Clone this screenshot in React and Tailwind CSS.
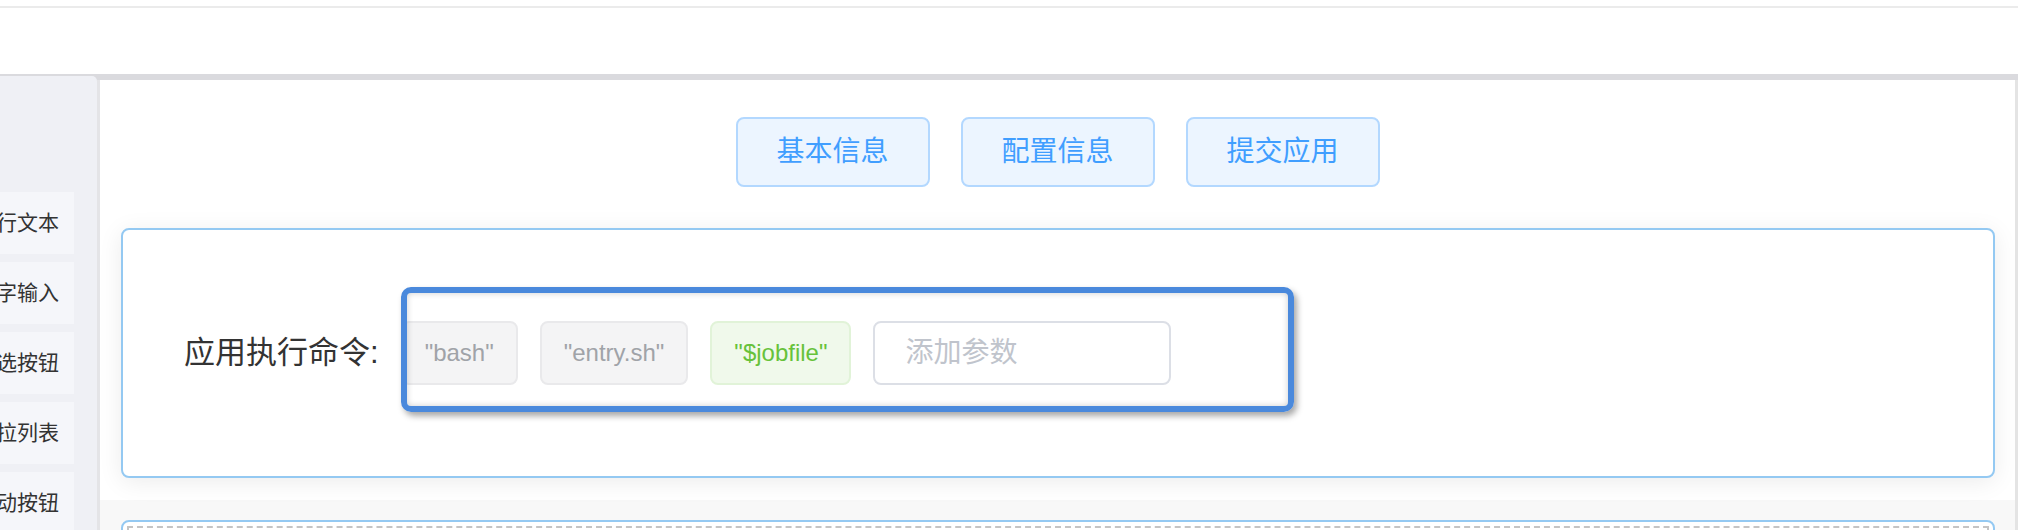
import React from 'react';

const sideItems = ['多行文本', '数字输入', '单选按钮', '下拉列表', '滑动按钮'];
const steps = ['基本信息', '配置信息', '提交应用'];

const App = () => {
  return (
    <div
      className="w-[2018px] h-[530px] overflow-hidden bg-white flex flex-col"
      style={{ fontFamily: '"Liberation Sans", "Noto Sans CJK SC", sans-serif' }}
    >
      {/* top bar */}
      <div className="h-[74px] shrink-0 bg-white pt-[6px]">
        <div className="h-[2px] bg-[#ebebeb]" />
      </div>

      <div className="flex flex-1 bg-[#dadade] min-h-0">
        {/* sidebar */}
        <div className="mt-[2px] w-[97px] shrink-0 bg-[#eff0f5] rounded-tr-[5px] pt-[116px] flex flex-col gap-[8px]">
          {sideItems.map((t) => (
            <div
              key={t}
              className="w-[74px] h-[62px] shrink-0 bg-[#f5f6fa] flex items-center justify-end overflow-hidden whitespace-nowrap pr-[15px] text-[21px] text-[#333]"
            >
              {t}
            </div>
          ))}
        </div>
        <div className="w-[3px] shrink-0 mt-[6px] bg-[#e4e4e7]" />

        {/* main */}
        <div className="mt-[6px] flex-1 bg-white border-r-[3px] border-[#e4e4e4] flex flex-col min-w-0">
          <div className="pt-[37px] flex justify-center gap-[31px]">
            {steps.map((s) => (
              <button
                key={s}
                className="w-[194px] h-[70px] rounded-[8px] border-2 border-[#b3d8ff] bg-[#ecf5ff] text-[#409eff] text-[28px]"
              >
                {s}
              </button>
            ))}
          </div>

          <div className="relative mt-[41px] ml-[21px] mr-[20px] h-[250px] shrink-0 rounded-[8px] border-2 border-[#94c9f2] bg-white shadow-[0_4px_24px_rgba(0,0,0,0.08)] flex items-center pl-[61px] gap-[22px]">
            <span className="text-[31px] text-[#333] whitespace-nowrap">应用执行命令:</span>
            <div className="flex items-center gap-[22px]">
              <span className="h-[64px] px-[22px] flex items-center rounded-[8px] border-2 border-[#e9e9eb] bg-[#f4f4f5] text-[#a0a3a8] text-[24px]">
                "bash"
              </span>
              <span className="h-[64px] px-[22px] flex items-center rounded-[8px] border-2 border-[#e9e9eb] bg-[#f4f4f5] text-[#a0a3a8] text-[24px]">
                "entry.sh"
              </span>
              <span className="h-[64px] px-[22px] flex items-center rounded-[8px] border-2 border-[#e1f3d8] bg-[#f0f9eb] text-[#67c23a] text-[24px]">
                "$jobfile"
              </span>
              <input
                className="w-[298px] h-[64px] rounded-[8px] border-2 border-[#dcdfe6] pl-[30px] text-[28px] outline-none placeholder:text-[#c0c4cc]"
                placeholder="添加参数"
              />
            </div>

            {/* highlight annotation */}
            <div className="absolute left-[278px] top-[57px] w-[893px] h-[125px] rounded-[10px] border-[6px] border-[#4a89dc] shadow-[3px_4px_6px_rgba(0,0,0,0.35),inset_0_0_6px_rgba(0,0,0,0.2)] pointer-events-none" />
          </div>

          <div className="h-[22px] shrink-0 bg-white" />
          <div className="flex-1 bg-[#f8f8f8] pt-[20px]">
            <div className="ml-[21px] mr-[20px] h-[100px] rounded-[8px] border-2 border-[#94c9f2] bg-white p-[4px]">
              <div className="h-full border-2 border-dashed border-[#c4c4c4]" />
            </div>
          </div>
        </div>
      </div>
    </div>
  );
};

export default App;
